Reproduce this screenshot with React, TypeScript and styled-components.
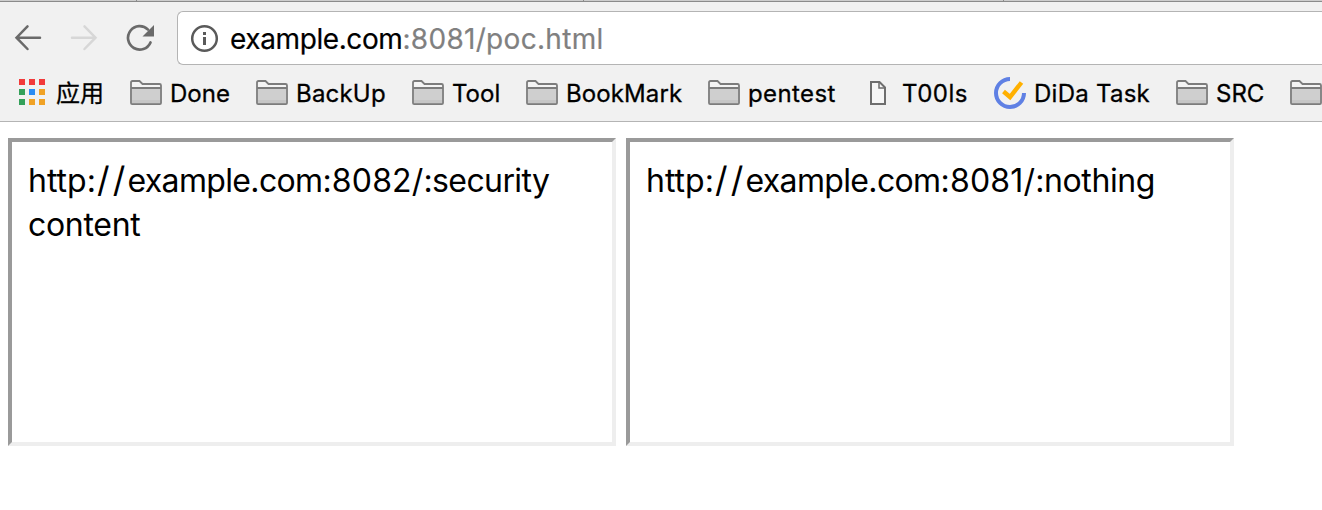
import React from "react";
import styled, { createGlobalStyle } from "styled-components";

const GlobalStyle = createGlobalStyle`
  *, *::before, *::after { box-sizing: border-box; }
  body {
    margin: 0;
    background: #fff;
    color: #000;
    font-family: Inter, "Noto Sans CJK SC", sans-serif;
    overflow: hidden;
  }
  svg { display: block; flex: none; }
`;

const Window = styled.div`
  display: flex;
  flex-direction: column;
  height: 510px;
  overflow: hidden;
`;

const TabStrip = styled.div`
  display: flex;
  height: 2px;
  flex: none;
  background: #cdcdcd;
  border-bottom: 1px solid #8b8b8b;
`;

const TabEdge = styled.span<{ $width: number }>`
  width: ${(p) => p.$width}px;
  border-right: 1px solid #8b8b8b;
`;

const Chrome = styled.header`
  height: 120px;
  flex: none;
  padding-top: 9px;
  background: #f1f1f1;
  border-bottom: 1px solid #b4b4b4;
  overflow: hidden;
`;

const Toolbar = styled.div`
  display: flex;
  align-items: center;
  height: 54px;
`;

const NavButtons = styled.nav`
  display: flex;
  gap: 24px;
  width: 177px;
  flex: none;
  padding-left: 12px;
`;

const NavButton = styled.button`
  display: flex;
  padding: 0;
  border: 0;
  background: none;
`;

const Omnibox = styled.div`
  display: flex;
  align-items: center;
  flex: 1;
  height: 54px;
  padding-left: 12px;
  background: #fff;
  border: 1px solid #b4b4b4;
  border-right: 0;
  border-radius: 6px 0 0 6px;
`;

const Url = styled.div`
  padding: 2px 0 0 10px;
  font-size: 28px;
  line-height: 34px;
  white-space: nowrap;
  -webkit-text-stroke: 0.2px;
`;

const Run = styled.span<{ $spacing: number; $muted?: boolean }>`
  letter-spacing: ${(p) => p.$spacing}px;
  color: ${(p) => (p.$muted ? "#808080" : "inherit")};
`;

const Slashes = styled.span`
  margin: 0 -1px 0 1px;
  font-size: 35px;
  line-height: 0;
  letter-spacing: 3.2px;
`;

const BookmarkBar = styled.div`
  display: flex;
  gap: 26px;
  height: 56px;
  padding-left: 16px;
`;

const Bookmark = styled.a`
  display: flex;
  align-items: center;
  gap: 8px;
  height: 56px;
  flex: none;
`;

const Label = styled.span<{ $width: number; $spacing?: number }>`
  width: ${(p) => p.$width}px;
  padding-top: 2px;
  letter-spacing: ${(p) => p.$spacing ?? 0}px;
  font-size: 24px;
  line-height: 32px;
  white-space: nowrap;
  -webkit-text-stroke: 0.3px;
`;

const Page = styled.main`
  display: flex;
  gap: 10px;
  padding: 16px 8px;
`;

const Frame = styled.section`
  width: 608px;
  height: 308px;
  padding: 17px 16px;
  border: 4px solid;
  border-color: #9a9a9a #eee #eee #9a9a9a;
  font-size: 32px;
  line-height: 44px;
`;

const Back = () => (
  <svg width="32" height="32" viewBox="0 0 32 32" fill="none" stroke="#6a6a6a" strokeWidth="2.5" strokeLinecap="round">
    <path d="M28 15.7H5M15.5 4.3 4.5 15.700l11 11.300" />
  </svg>
);

const Forward = () => (
  <svg width="32" height="32" viewBox="0 0 32 32" fill="none" stroke="#d7d7d7" strokeWidth="2.5" strokeLinecap="round">
    <path d="M4 15.700h23M16.500 4.300l11 11.400-11 11.300" />
  </svg>
);

const Reload = () => (
  <svg width="32" height="32" viewBox="0 0 32 32">
    <path d="M26.5 20.4A11.7 11.7 0 1 1 24 7.6" fill="none" stroke="#6a6a6a" strokeWidth="2.7" strokeLinecap="round" />
    <path d="M30 3v11.5H18.5z" fill="#6a6a6a" />
  </svg>
);

const Info = () => (
  <svg width="30" height="30" viewBox="0 0 30 30">
    <circle cx="14.5" cy="15.5" r="12.3" fill="none" stroke="#5a5a5a" strokeWidth="2.5" />
    <path d="M13 9h3v3h-3zM13 14h3v8h-3z" fill="#5a5a5a" />
  </svg>
);

const APP_COLORS = ["#f23a3a", "#f23a3a", "#f23a3a", "#34a05a", "#2a8cf4", "#f0a226", "#34a05a", "#f0a226", "#f0a226"];

const Apps = () => (
  <svg width="32" height="32" viewBox="0 0 32 32">
    {APP_COLORS.map((color, i) => (
      <rect key={i} x={3 + (i % 3) * 10} y={2 + Math.floor(i / 3) * 10} width="6" height="6" fill={color} />
    ))}
  </svg>
);

const Folder = () => (
  <svg width="32" height="32" viewBox="0 0 32 32">
    <path d="M1 27V5.5Q1 4 2.5 4H9.5L13 7H29.5Q31 7 31 8.5V26.5Q31 28 29.5 28H2.5Q1 28 1 26.5Z" fill="#f4f4f4" />
    <path d="M2 11h28v12H2z" fill="#cfcfcf" />
    <path d="M2 23h28v4H2z" fill="#c6c6c6" />
    <path d="M1 26V5.5Q1 4 2.5 4H9.5L12.5 7H29.5Q31 7 31 8.5V26Q31 27.2 29.8 27.2H2.2Q1 27.2 1 26ZM1 11H31" fill="none" stroke="#7c7c7c" strokeWidth="1.8" />
  </svg>
);

const PageIcon = () => (
  <svg width="32" height="32" viewBox="0 0 32 32" fill="none" stroke="#6e6e6e">
    <path d="M9 5h8.5L23 10.5V27H9z" fill="#f6f6f6" strokeWidth="2" />
    <path d="M17 5v6h6" strokeWidth="1.5" />
  </svg>
);

const Dida = () => (
  <svg width="32" height="32" viewBox="0 0 32 32" fill="none">
    <path d="M16 2A14 14 0 1 0 30 16" stroke="#5f80e4" strokeWidth="4" />
    <path d="M9.5 14.5l6.5 5.5L27.5 5.5" stroke="#ffb000" strokeWidth="4.4" />
  </svg>
);

type Item = { label: string; width: number; spacing?: number; icon: () => React.JSX.Element };

const BOOKMARKS: Item[] = [
  { label: "应用", width: 48, icon: Apps },
  { label: "Done", width: 60, icon: Folder },
  { label: "BackUp", width: 90, spacing: 0.2, icon: Folder },
  { label: "Tool", width: 48, icon: Folder },
  { label: "BookMark", width: 116, spacing: 0.1, icon: Folder },
  { label: "pentest", width: 88, spacing: 0.4, icon: Folder },
  { label: "T00ls", width: 66, spacing: 0.5, icon: PageIcon },
  { label: "DiDa Task", width: 116, spacing: 0.25, icon: Dida },
  { label: "SRC", width: 48, icon: Folder },
  { label: "", width: 48, icon: Folder },
];

export default function App() {
  return (
    <>
      <GlobalStyle />
      <Window>
        <TabStrip>
          <TabEdge $width={137} />
          <TabEdge $width={447} />
          <TabEdge $width={420} />
        </TabStrip>
        <Chrome>
          <Toolbar>
            <NavButtons>
              <NavButton aria-label="Back"><Back /></NavButton>
              <NavButton aria-label="Forward"><Forward /></NavButton>
              <NavButton aria-label="Reload"><Reload /></NavButton>
            </NavButtons>
            <Omnibox>
              <Info />
              <Url>
                <Run $spacing={-0.4}>example.com</Run>
                <Run $spacing={0.3} $muted>:8081/poc.html</Run>
              </Url>
            </Omnibox>
          </Toolbar>
          <BookmarkBar>
            {BOOKMARKS.map(({ label, width, spacing, icon: Icon }, i) => (
              <Bookmark key={i}>
                <Icon />
                <Label $width={width} $spacing={spacing}>{label}</Label>
              </Bookmark>
            ))}
          </BookmarkBar>
        </Chrome>
        <Page>
          <Frame>
            <Run $spacing={0}>http:</Run>
            <Slashes>//</Slashes>
            <Run $spacing={-0.65}>example.com</Run>
            <Run $spacing={0.15}>:8082/</Run>
            <Run $spacing={-0.6}>:security</Run>{" "}
            <Run $spacing={-0.3}>content</Run>
          </Frame>
          <Frame>
            <Run $spacing={0}>http:</Run>
            <Slashes>//</Slashes>
            <Run $spacing={-0.65}>example.com</Run>
            <Run $spacing={0.2}>:8081/</Run>
            <Run $spacing={-0.4}>:nothing</Run>
          </Frame>
        </Page>
      </Window>
    </>
  );
}
